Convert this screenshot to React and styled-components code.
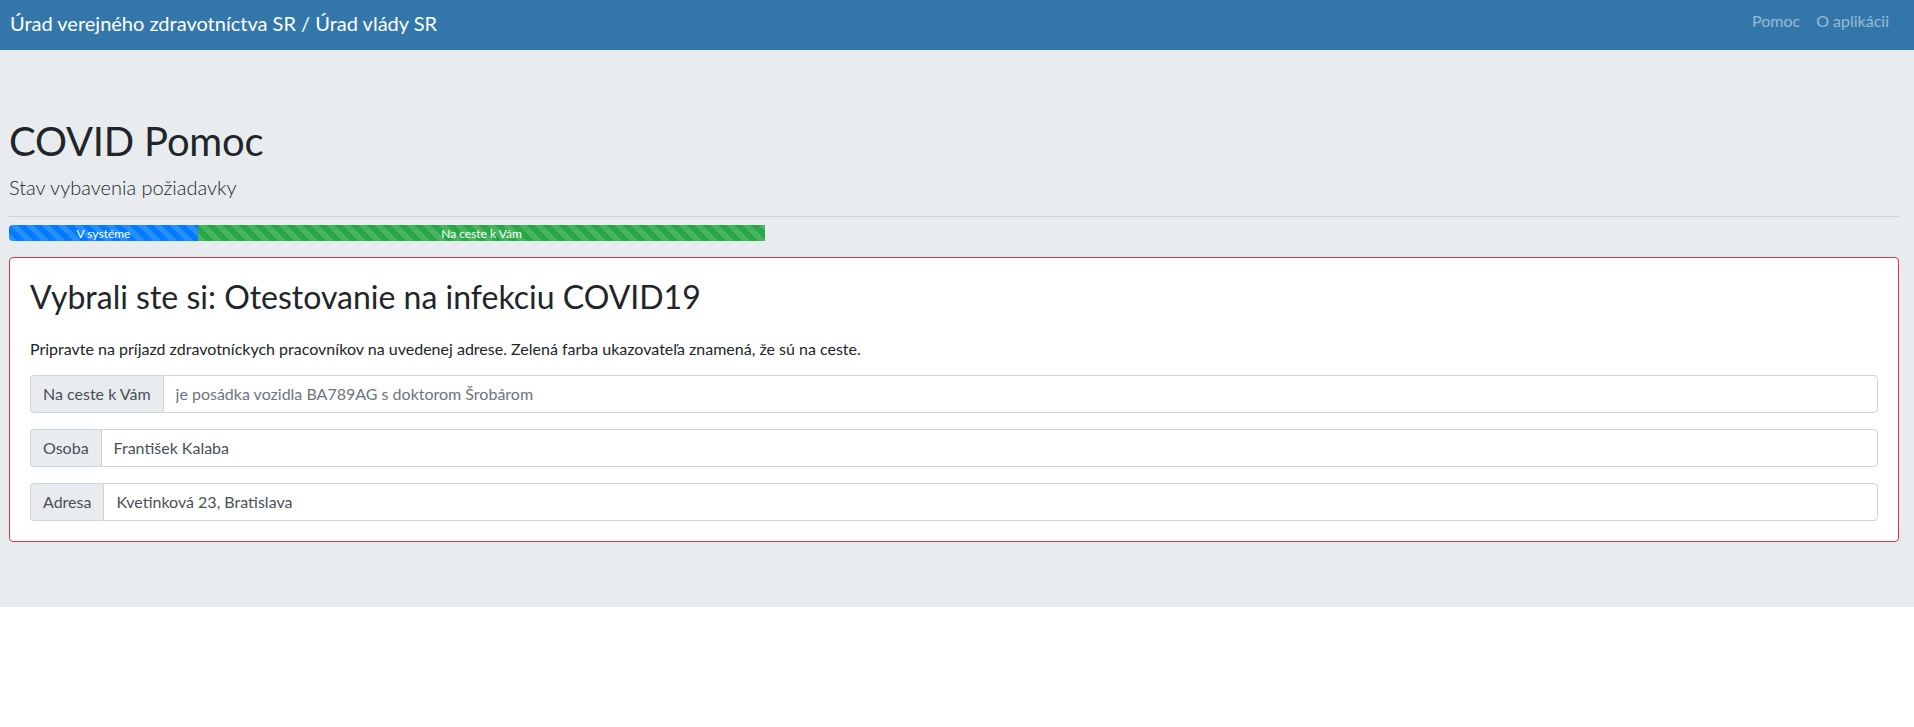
import React from 'react';
import styled, { createGlobalStyle } from 'styled-components';

const GlobalStyle = createGlobalStyle`
    body {
        margin: 0;
        background: #fff;
        color: #212529;
        font-family: Lato, "Open Sans", "Liberation Sans", sans-serif;
        font-size: 16px;
    }
    * {
        box-sizing: border-box;
    }
`;

// horna lista
const Navbar = styled.nav`
    height: 50px;
    display: flex;
    align-items: flex-start;
    justify-content: space-between;
    padding: 8px 17px 0 10px;
    background-color: #3377aa;
`;

const Brand = styled.a`
    color: #fff;
    font-size: 20px;
    line-height: 30px;
    text-decoration: none;
    white-space: nowrap;
`;

const NavList = styled.ul`
    display: flex;
    margin: 0;
    padding: 1px 0 0;
    list-style: none;
`;

const NavLink = styled.a`
    display: block;
    padding: 0 8px;
    color: rgba(255, 255, 255, 0.5);
    font-size: 16px;
    line-height: 24px;
    text-decoration: none;
`;

const Jumbotron = styled.section`
    padding: 67px 15px 65px 9px;
    background-color: #e9ecef;
`;

const Title = styled.h1`
    margin: 0 0 7px;
    font-size: 40px;
    font-weight: 400;
    line-height: 1.2;
    letter-spacing: -0.2px;
`;

const Lead = styled.p`
    margin: 0 0 14px;
    font-size: 20px;
    font-weight: 300;
    line-height: 1.5;
`;

const Divider = styled.hr`
    margin: 0 0 8px;
    border: 0;
    border-top: 1px solid rgba(0, 0, 0, 0.1);
`;

const Progress = styled.div`
    display: flex;
    height: 16px;
    margin-bottom: 16px;
    overflow: hidden;
    border-radius: 4px;
    background-color: #e9ecef;
    font-size: 12px;
`;

const ProgressBar = styled.div`
    display: flex;
    align-items: center;
    justify-content: center;
    color: #fff;
    white-space: nowrap;
    background-color: ${p => p.$color};
    background-image: linear-gradient(
        45deg,
        rgba(255, 255, 255, 0.15) 25%,
        transparent 25%,
        transparent 50%,
        rgba(255, 255, 255, 0.15) 50%,
        rgba(255, 255, 255, 0.15) 75%,
        transparent 75%,
        transparent
    );
    background-size: 16px 16px;
`;

const Card = styled.div`
    border: 1px solid #dc3545;
    border-radius: 4px;
    background-color: #fff;
`;

const CardBody = styled.div`
    padding: 20px;
`;

const CardTitle = styled.h2`
    margin: 0 0 21px;
    font-size: 32px;
    font-weight: 400;
    line-height: 1.2;
`;

const Text = styled.p`
    margin: 0 0 14px;
    font-size: 16px;
    line-height: 1.5;
`;

const InputGroup = styled.div`
    display: flex;
    height: 38px;
    margin-bottom: 16px;

    &:last-child {
        margin-bottom: 0;
    }
`;

const Addon = styled.span`
    display: flex;
    align-items: center;
    padding: 6px 12px;
    border: 1px solid #ced4da;
    border-right: 0;
    border-radius: 4px 0 0 4px;
    background-color: #e9ecef;
    color: #495057;
    line-height: 24px;
    white-space: nowrap;
`;

const Field = styled.input`
    flex: 1;
    min-width: 0;
    padding: 6px 12px;
    border: 1px solid #ced4da;
    border-radius: 0 4px 4px 0;
    background: #fff;
    color: #495057;
    font: inherit;
    line-height: 24px;
    outline: none;

    &::placeholder {
        color: #6c757d;
        opacity: 1;
    }
`;

const STEPS = [
    { label: 'V systéme', color: '#007bff', width: 10 },
    { label: 'Na ceste k Vám', color: '#28a745', width: 30 }
];

const FIELDS = [
    { label: 'Na ceste k Vám', placeholder: 'je posádka vozidla BA789AG s doktorom Šrobárom' },
    { label: 'Osoba', value: 'František Kalaba' },
    { label: 'Adresa', value: 'Kvetinková 23, Bratislava' }
];

export default function App() {
    return (
        <>
            <GlobalStyle />
            <Navbar>
                <Brand href="#">Úrad verejného zdravotníctva SR / Úrad vlády SR</Brand>
                <NavList>
                    <li><NavLink href="#">Pomoc</NavLink></li>
                    <li><NavLink href="#">O aplikácii</NavLink></li>
                </NavList>
            </Navbar>

            <Jumbotron>
                <Title>COVID Pomoc</Title>
                <Lead>Stav vybavenia požiadavky</Lead>
                <Divider />
                <Progress>
                    {STEPS.map(step => (
                        <ProgressBar key={step.label} $color={step.color} style={{ width: step.width + '%' }}>
                            {step.label}
                        </ProgressBar>
                    ))}
                </Progress>

                <Card>
                    <CardBody>
                        <CardTitle>Vybrali ste si: Otestovanie na infekciu COVID19</CardTitle>
                        <Text>
                            Pripravte na príjazd zdravotníckych pracovníkov na uvedenej adrese. Zelená farba ukazovateľa znamená, že sú na ceste.
                        </Text>
                        {FIELDS.map(f => (
                            <InputGroup key={f.label}>
                                <Addon>{f.label}</Addon>
                                <Field readOnly placeholder={f.placeholder} value={f.value || ''} />
                            </InputGroup>
                        ))}
                    </CardBody>
                </Card>
            </Jumbotron>
        </>
    );
}
